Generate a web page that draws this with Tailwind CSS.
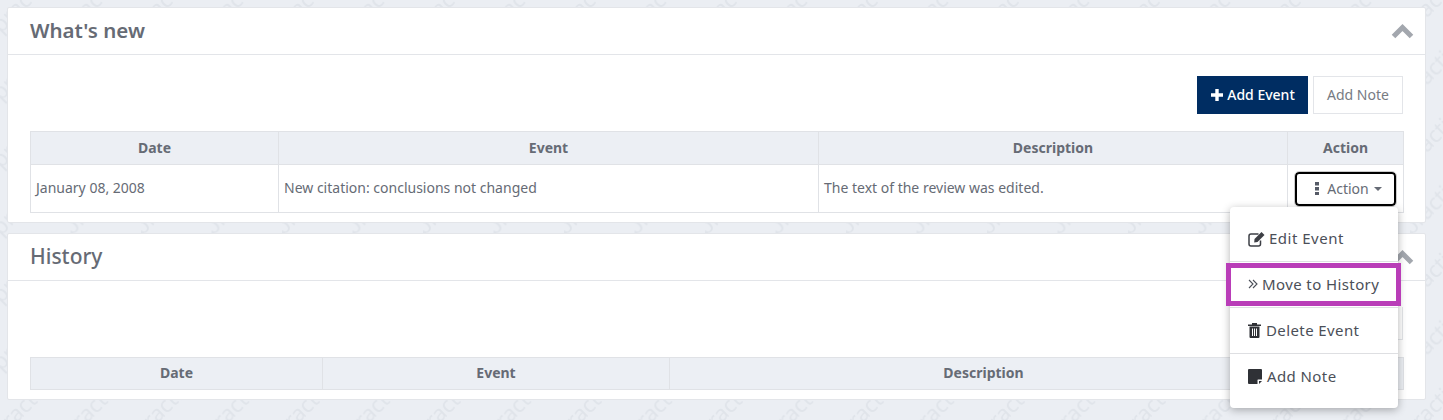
<!DOCTYPE html>
<html lang="en">
<head>
  <meta charset="UTF-8">
  <title>What's new</title>
  <script src="https://cdn.jsdelivr.net/npm/@tailwindcss/browser@4"></script>
</head>
<body class="relative h-[420px] overflow-hidden bg-[#ebeef3] font-['Noto_Sans',sans-serif] text-[14px] text-[#666b75]">
  <!-- watermark -->
  <svg class="absolute inset-0 h-full w-full" aria-hidden="true">
    <defs>
      <pattern id="wm" width="70.5" height="67.5" patternUnits="userSpaceOnUse">
        <g font-family="Noto Sans" font-size="22" fill="#e0e4ea">
          <text transform="translate(1 34) rotate(-45)">practice</text>
          <text transform="translate(1 101.500) rotate(-45)">practice</text>
          <text transform="translate(-69.500 34) rotate(-45)">practice</text>
          <text transform="translate(-69.500 101.500) rotate(-45)">practice</text>
        </g>
      </pattern>
    </defs>
    <rect width="100%" height="100%" fill="url(#wm)"></rect>
  </svg>

  <div class="relative pt-[7px] pr-[17px] pl-[7px]">
    <!-- what's new -->
    <section class="h-[216px] rounded-[2px] border border-[#e3e5e9] bg-white">
      <header class="flex h-[47px] items-center justify-between border-b border-[#e3e5e9] pr-[11px] pl-[22px]">
        <h2 class="pb-[2px] text-[20.500px] font-semibold text-[#666b75]">What's new</h2>
        <svg class="h-[16px] w-[23px]" viewBox="0 0 23 16"><path d="M2.500 13.500 11.500 4.500 20.500 13.500" fill="none" stroke="#a3a7ae" stroke-width="5"/></svg>
      </header>
      <div class="px-[22px]">
        <div class="flex justify-end gap-[5px] pt-[21px] pb-[17px]">
          <button class="flex h-[38px] w-[111px] items-center justify-center gap-[3px] bg-[#002d62] pb-[1px] text-[14px] font-medium text-white">
            <svg class="h-[14px] w-[14px]" viewBox="0 0 14 14"><path d="M7 1v12M1 7h12" stroke="#fff" stroke-width="3.400"/></svg>
            Add Event
          </button>
          <button class="h-[38px] w-[90px] border border-[#e3e5e9] bg-white pb-[1px] text-[14px] text-[#777b83]">Add Note</button>
        </div>
        <table class="w-[1373px] table-fixed border-collapse">
          <colgroup><col class="w-[248px]"><col class="w-[540px]"><col class="w-[469px]"><col class="w-[116px]"></colgroup>
          <thead>
            <tr class="h-[33px] bg-[#eceff4]">
              <th class="border border-[#e0e2e6] pb-[2px] font-bold">Date</th>
              <th class="border border-[#e0e2e6] pb-[2px] font-bold">Event</th>
              <th class="border border-[#e0e2e6] pb-[2px] font-bold">Description</th>
              <th class="border border-[#e0e2e6] pb-[2px] font-bold">Action</th>
            </tr>
          </thead>
          <tbody>
            <tr class="h-[48px]">
              <td class="border border-[#e0e2e6] px-[5px] pb-[2px]">January 08, 2008</td>
              <td class="border border-[#e0e2e6] px-[5px] pb-[2px]">New citation: conclusions not changed</td>
              <td class="border border-[#e0e2e6] px-[5px] pb-[2px]">The text of the review was edited.</td>
              <td class="border border-[#e0e2e6] text-center">
                <button class="mx-auto flex h-[34px] w-[101px] items-center justify-center gap-[8px] rounded-[4px] border-2 border-black bg-white pb-[1px] pl-[6px] outline outline-[#ccc]">
                  <svg class="h-[13px] w-[4px]" viewBox="0 0 4 13"><path d="M0 0h4v3.500H0zM0 5h4v3.500H0zM0 10h4v3H0z" fill="#555a66"/></svg>
                  <span class="flex items-center gap-[5px]">Action<span class="mt-[2px] h-0 w-0 border-x-[4px] border-t-[4px] border-x-transparent border-t-[#666b75]"></span></span>
                </button>
              </td>
            </tr>
          </tbody>
        </table>
      </div>
    </section>

    <!-- history -->
    <section class="mt-[10px] h-[167px] rounded-[2px] border border-[#e3e5e9] bg-white">
      <header class="flex h-[47px] items-center justify-between border-b border-[#e3e5e9] pr-[11px] pl-[22px]">
        <h2 class="text-[21px] font-medium text-[#666b75]">History</h2>
        <svg class="h-[16px] w-[23px]" viewBox="0 0 23 16"><path d="M2.500 13.500 11.500 4.500 20.500 13.500" fill="none" stroke="#a3a7ae" stroke-width="5"/></svg>
      </header>
      <div class="px-[22px] pt-[76px]">
        <table class="w-[1373px] table-fixed border-collapse">
          <colgroup><col class="w-[292px]"><col class="w-[347px]"><col class="w-[628px]"><col class="w-[106px]"></colgroup>
          <thead>
            <tr class="h-[32px] bg-[#eceff4]">
              <th class="border border-[#e0e2e6] pb-[2px] font-bold">Date</th>
              <th class="border border-[#e0e2e6] pb-[2px] font-bold">Event</th>
              <th class="border border-[#e0e2e6] pb-[2px] font-bold">Description</th>
              <th class="border border-[#e0e2e6] pb-[2px] font-bold"></th>
            </tr>
          </thead>
        </table>
      </div>
    </section>
  </div>

  <!-- history add button peeking out behind menu -->
  <div class="absolute top-[307px] left-[1390px] h-[33px] w-[13px] border-r border-b border-[#e3e5e9]"></div>

  <!-- action menu -->
  <div class="absolute top-[207px] left-[1230px] w-[168px] rounded-[4px] bg-white text-[15px] text-[#4b4f58] shadow-[0_2px_8px_rgba(0,0,0,0.3)]">
    <a class="flex h-[55px] items-center gap-[3px] border-b border-[#dedfe2] pt-[9px] pl-[18px] tracking-[0.5px]">
      <svg class="h-[16px] w-[18px]" viewBox="0 0 18 16"><path d="M12.500 9.500V13a2 2 0 0 1-2 2H3a2 2 0 0 1-2-2V5a2 2 0 0 1 2-2h7.500" fill="none" stroke="#3d3f45" stroke-width="1.500"/><path d="M6.500 8 13.500 1l3 3-7 7-3.300.4z" fill="#3d3f45"/></svg>
      Edit Event
    </a>
    <a class="flex h-[46px] items-center gap-[4px] border-b border-[#dedfe2] pb-[1px] pl-[18px] tracking-[0.4px]">
      <svg class="h-[12px] w-[10px]" viewBox="0 0 10 12"><path d="M1 2l4 4-4 4M5 2l4 4-4 4" fill="none" stroke="#4b4f58" stroke-width="1.100"/></svg>
      Move to History
    </a>
    <a class="flex h-[46px] items-center gap-[5px] border-b border-[#dedfe2] pb-[1px] pl-[18px] tracking-[0.4px]">
      <svg class="h-[16px] w-[13px]" viewBox="0 0 13 16"><path d="M0 2.500h13V4H0zM4 2.500V1h5v1.500z" fill="#2f3136"/><path d="M1.500 4.500h10V15a1 1 0 0 1-1 1h-8a1 1 0 0 1-1-1zM4 6.500V14h1V6.500zM6 6.500V14h1V6.500zM8 6.500V14h1V6.500z" fill="#2f3136" fill-rule="evenodd"/></svg>
      Delete Event
    </a>
    <a class="flex h-[54px] items-center gap-[5px] pb-[10px] pl-[18px] tracking-[0.4px]">
      <svg class="h-[15px] w-[14px]" viewBox="0 0 14 15"><path d="M1 0h12a1 1 0 0 1 1 1v9.500H10a.5.5 0 0 0-.5.5v4H1a1 1 0 0 1-1-1V1a1 1 0 0 1 1-1z" fill="#2f3136"/><path d="M11 12h3l-3 3z" fill="#2f3136"/></svg>
      Add Note
    </a>
  </div>
  <!-- highlight -->
  <div class="absolute top-[263px] left-[1226px] h-[43px] w-[175px] border-[5px] border-[#b93db8]"></div>
</body>
</html>
